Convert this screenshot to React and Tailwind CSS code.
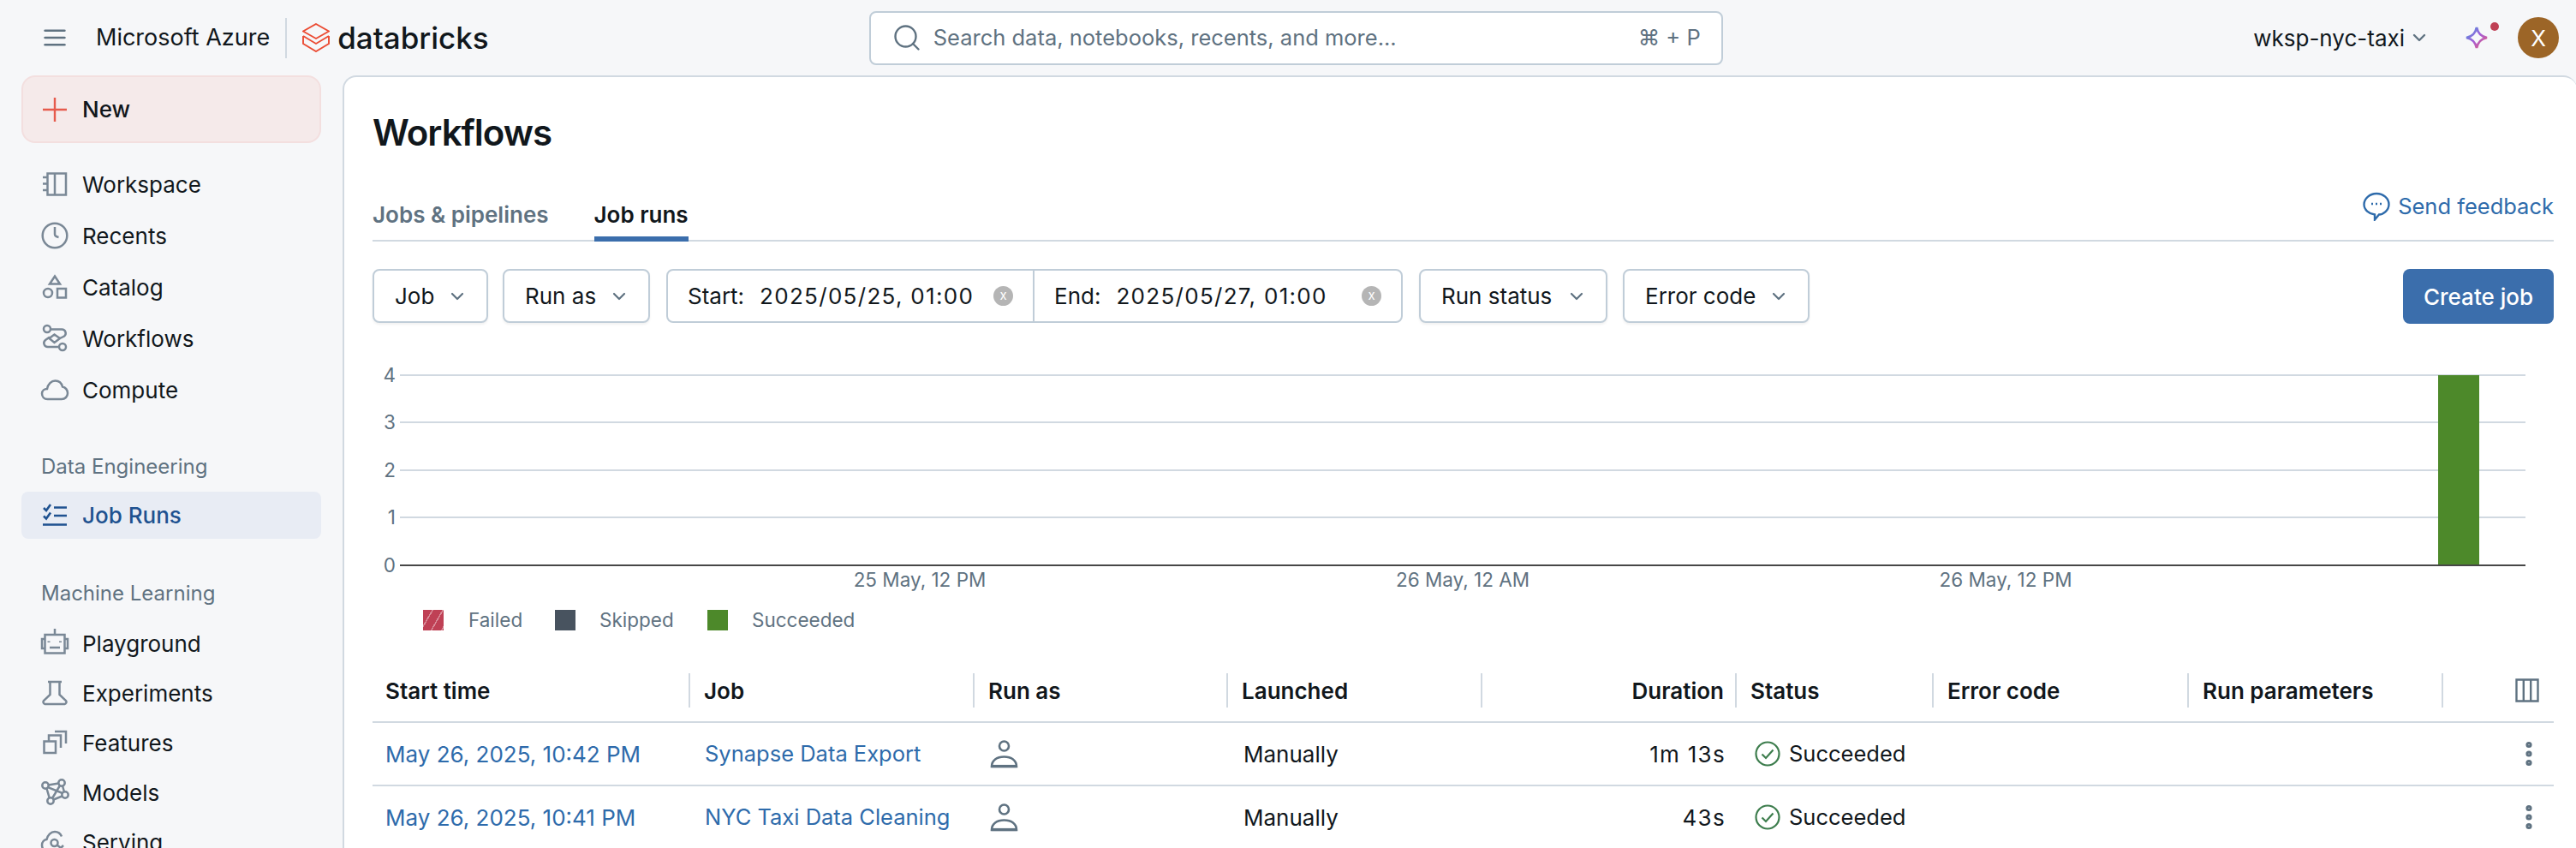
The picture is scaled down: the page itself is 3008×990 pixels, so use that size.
import React from "react";
import { ChevronDown, Menu, MoreVertical, Search } from "lucide-react";

function Svg({ children }) {
  return (
    <svg viewBox="0 0 28 28" fill="none" stroke="currentColor" strokeWidth="2.5" className="w-7 h-7 shrink-0 overflow-visible text-[#7a8896]">
      {children}
    </svg>
  );
}

const WorkspaceIcon = () => (
  <Svg>
    <path d="M5.500 1.500H27v25H5.500zM14 1.500v25M0 6h5.500M0 13.500h5.500M0 21h5.500" />
  </Svg>
);
const ClockIcon = () => (
  <Svg>
    <circle cx="14" cy="14" r="14.300" />
    <path d="M14 4v8.500c0 1.500 2 3 4.500 3.500" />
  </Svg>
);
const CatalogIcon = () => (
  <Svg>
    <path d="M14 1.500l6 9H8z" />
    <circle cx="6" cy="21" r="5" />
    <path d="M17 16h10v10.500H17z" />
  </Svg>
);
const WorkflowsIcon = () => (
  <Svg>
    <circle cx="5" cy="3" r="4" />
    <circle cx="23" cy="24" r="4" />
    <path d="M9 3.500h13a4.500 4.500 0 0 1 3 8L20 14M19 24H6a4.500 4.500 0 0 1-3-8l5-3.500M7.500 14l6-4.500 6.500 4.500-6.500 5z" />
  </Svg>
);
const CloudIcon = () => (
  <Svg>
    <path d="M5.500 25C1.500 25-1 22-1 18.500-1 15 2 13 5 13 6 7.500 10 3.500 14.500 3.500 19 3.500 22 6.500 23 10.500 26.500 11 29 14.500 29 18 29 22 26 25 22 25z" />
  </Svg>
);
const JobRunsIcon = () => (
  <svg viewBox="0 0 28 28" fill="none" stroke="currentColor" strokeWidth="2.600" className="w-7 h-7 shrink-0 text-[#1f5290]">
    <path d="M1 5l3 3 5-7M1 14.500l3 3 5-7M13 4.500h15M13 14h15M0 24.500h28" />
  </svg>
);
const BotIcon = () => (
  <Svg>
    <path d="M14-3v6M2.500 4h23v21.500h-23zM2.500 9H-1v11h3.500M25.500 9H29v11h-3.500M8 19h12" />
    <path d="M7 11.500v1.500M20.500 11.500v1.500" strokeWidth="3" />
  </Svg>
);
const FlaskIcon = () => (
  <Svg>
    <path d="M8.500 1h11v15L27 23a2.500 2.500 0 0 1-1.500 4h-23A2.500 2.500 0 0 1 1 23l7.500-7zM6 1h16" />
  </Svg>
);
const FeaturesIcon = () => (
  <Svg>
    <path d="M1.500 12.500H15V26H1.500zM7 12.500V5.500h14V20M14 1H27v14" />
  </Svg>
);
const ModelsIcon = () => (
  <Svg>
    <circle cx="22" cy="3" r="3.700" />
    <circle cx="3" cy="6" r="3.700" />
    <circle cx="26" cy="17" r="3.700" />
    <circle cx="9" cy="24" r="3.700" />
    <path d="M6.500 5.500L18.500 3.500M6 8.200L23 15M4.500 9.500L7.700 20.500M20 6L11 21M23 6.500l2 7M12.500 22.500l10-4" />
  </Svg>
);
const ServingIcon = () => (
  <Svg>
    <path d="M3 25C0 23-1 20-1 17.500-1 14 1.500 11.500 4.500 11 5.500 6 9.500 2 14 2c3.500 0 6.500 2 8 5.500" />
    <circle cx="13.500" cy="15" r="4" />
    <path d="M16.500 17.500L24 23M21 21l3-3" />
  </Svg>
);

const TOP_NAV = [
  { label: "Workspace", icon: WorkspaceIcon },
  { label: "Recents", icon: ClockIcon },
  { label: "Catalog", icon: CatalogIcon },
  { label: "Workflows", icon: WorkflowsIcon },
  { label: "Compute", icon: CloudIcon },
];

const ML_NAV = [
  { label: "Playground", icon: BotIcon },
  { label: "Experiments", icon: FlaskIcon },
  { label: "Features", icon: FeaturesIcon },
  { label: "Models", icon: ModelsIcon },
  { label: "Serving", icon: ServingIcon },
];

const COLUMNS = [
  { label: "Start time", width: "w-[371px]", pad: "pl-[15px]" },
  { label: "Job", width: "w-[332px]", pad: "pl-[16px]" },
  { label: "Run as", width: "w-[296px]", pad: "pl-[16px]" },
  { label: "Launched", width: "w-[297px]", pad: "pl-[16px]" },
  { label: "Duration", width: "w-[297px]", pad: "justify-end pr-[13px]" },
  { label: "Status", width: "w-[230px]", pad: "pl-[16px]" },
  { label: "Error code", width: "w-[298px]", pad: "pl-[16px]" },
  { label: "Run parameters", width: "w-[297px]", pad: "pl-[16px]" },
];

const RUNS = [
  { start: "May 26, 2025, 10:42 PM", job: "Synapse Data Export", duration: "1m 13s" },
  { start: "May 26, 2025, 10:41 PM", job: "NYC Taxi Data Cleaning", duration: "43s" },
];

function Logo() {
  return (
    <svg viewBox="0 0 32 34" fill="none" stroke="#eb4b33" strokeWidth="1.900" className="w-8 h-[34px]">
      <path d="M16 1L31 9.500 16 18 1 9.500zM1 15l15 9 15-9M1 15v9l15 9 15-9v-9" />
    </svg>
  );
}

function Sparkle() {
  return (
    <svg viewBox="0 0 26 26" fill="none" strokeWidth="2.800" className="w-[26px] h-[26px] overflow-visible">
      <defs>
        <linearGradient id="spark" x1="0" y1="0" x2="1" y2="1">
          <stop offset="0" stopColor="#4299e0" />
          <stop offset="0.5" stopColor="#a25ed8" />
          <stop offset="1" stopColor="#ef5a72" />
        </linearGradient>
      </defs>
      <path stroke="url(#spark)" d="M13 1c1.500 7 4.500 10.500 12 12-7.500 1.500-10.500 5-12 12-1.500-7-4.500-10.500-12-12 7.500-1.500 10.500-5 12-12z" />
    </svg>
  );
}

function NavRow({ item, height }) {
  const Icon = item.icon;
  return (
    <div className={`flex items-center gap-[18px] pl-[50px] text-[26px] text-[#11171c] ${height}`}>
      <Icon />
      <span>{item.label}</span>
    </div>
  );
}

function FilterSelect({ label, width }) {
  return (
    <div className={`flex items-center justify-between h-[63px] pl-[24px] pr-[22px] bg-white border-2 border-[#c0cdd8] rounded-lg shadow-[0_2px_3px_rgba(0,0,0,0.06)] text-[26px] text-[#11171c] ${width}`}>
      <span>{label}</span>
      <ChevronDown className="w-6 h-6 text-[#5f7281]" strokeWidth={2.2} />
    </div>
  );
}

function DateField({ label, value, width }) {
  return (
    <div className={`flex items-center pl-[23px] text-[26px] text-[#11171c] ${width}`}>
      <span className="mr-[18px]">{label}</span>
      <span className="tracking-[1.3px]">{value}</span>
      <span className="ml-auto mr-[23px] w-[23px] h-[23px] rounded-full bg-[#b5b5b5] text-white text-[15px] flex items-center justify-center">x</span>
    </div>
  );
}

function Chart() {
  const ticks = [
    { label: "4", y: 38 },
    { label: "3", y: 93 },
    { label: "2", y: 149 },
    { label: "1", y: 204 },
  ];
  return (
    <svg width="2547" height="295" className="mt-[22px] block">
      {ticks.map((t) => (
        <g key={t.label}>
          <line x1="32" x2="2514" y1={t.y} y2={t.y} stroke="#d1d9e1" strokeWidth="2" />
          <text x="27" y={t.y + 8} textAnchor="end" className="fill-[#5f7281] text-[22.5px]">{t.label}</text>
        </g>
      ))}
      <rect x="2412" y="38" width="48" height="222" fill="#4d892a" />
      <line x1="32" x2="2514" y1="260" y2="260" stroke="#474747" strokeWidth="2" />
      <text x="27" y="268" textAnchor="end" className="fill-[#5f7281] text-[22.5px]">0</text>
      <text x="639" y="285" textAnchor="middle" className="fill-[#5f7281] text-[22.5px]">25 May, 12 PM</text>
      <text x="1273" y="285" textAnchor="middle" className="fill-[#5f7281] text-[22.5px]">26 May, 12 AM</text>
      <text x="1907" y="285" textAnchor="middle" className="fill-[#5f7281] text-[22.5px]">26 May, 12 PM</text>
    </svg>
  );
}

function Legend() {
  return (
    <div className="flex items-center h-6 mt-[17px] pl-[59px] text-[22.5px] text-[#5f7281]">
      <span className="w-6 h-6 bg-[repeating-linear-gradient(120deg,#bf4055_0,#bf4055_9px,#d98c99_9px,#d98c99_10.500px)]" />
      <span className="ml-[29px] w-[101px]">Failed</span>
      <span className="w-6 h-6 bg-[#48535f]" />
      <span className="ml-[28px] w-[126px]">Skipped</span>
      <span className="w-6 h-6 bg-[#4d892a]" />
      <span className="ml-[28px]">Succeeded</span>
    </div>
  );
}

function PersonIcon() {
  return (
    <svg viewBox="0 0 33 33" fill="none" stroke="#5f7281" strokeWidth="2.600" className="w-[33px] h-[33px] shrink-0">
      <circle cx="16.500" cy="7" r="5.500" />
      <path d="M2 31C2 23.500 8 19.500 16.500 19.500S31 23.500 31 31z" />
      <path d="M2 30.500h29" strokeWidth="3.200" />
    </svg>
  );
}

function SuccessIcon() {
  return (
    <svg viewBox="0 0 30 30" fill="none" stroke="#3d7d4d" strokeWidth="2.200" className="w-[30px] h-[30px] shrink-0">
      <circle cx="15" cy="15" r="13.500" />
      <path d="M8.500 15.500l4.500 4.500 8.500-9.500" />
    </svg>
  );
}

function RunRow({ run }) {
  return (
    <div className="flex items-center h-[74px] border-b-2 border-[#d1d9e1] text-[26px] text-[#11171c]">
      <span className="w-[371px] pl-[15px] text-[#2e6bab]">{run.start}</span>
      <span className="w-[332px] pl-[17px] text-[25.5px] text-[#2e6bab]">{run.job}</span>
      <span className="w-[296px] pl-[18px] flex"><PersonIcon /></span>
      <span className="w-[297px] pl-[18px]">Manually</span>
      <span className="w-[297px] pr-[13px] text-right tracking-[1.3px]">{run.duration}</span>
      <span className="w-[230px] pl-[21px] flex items-center gap-[10px] text-[25.5px]"><SuccessIcon />Succeeded</span>
      <span className="flex-1 flex justify-end pr-[11px]">
        <MoreVertical className="w-9 h-9 text-[#5f7281]" strokeWidth={2.8} />
      </span>
    </div>
  );
}

export default function App() {
  return (
    <div className="w-[3008px] h-[990px] overflow-hidden bg-[#f6f7f9] font-[Inter,sans-serif]">
      {/* Top bar */}
      <header className="flex items-center h-[88px] pl-[50px] pr-[20px]">
        <Menu className="w-7 h-7 text-[#5f7281] scale-x-[1.2]" strokeWidth={2.2} />
        <span className="ml-[34px] text-[27px] text-[#11171c]">Microsoft Azure</span>
        <span className="ml-[18px] w-0.5 h-[47px] bg-[#d1d9e1]" />
        <span className="ml-[18px] flex"><Logo /></span>
        <span className="ml-[9px] text-[35px] font-medium text-[#11171c]">databricks</span>
        <div className="ml-[444px] flex items-center w-[997px] h-[63px] pl-[24px] pr-[24px] bg-white border-2 border-[#c0cdd8] rounded-lg text-[25.5px] text-[#5f7281]">
          <Search className="w-9 h-9" strokeWidth={1.6} />
          <span className="ml-[13px]">Search data, notebooks, recents, and more...</span>
          <span className="ml-auto">⌘ + P</span>
        </div>
        <span className="ml-auto text-[26px] text-[#11171c]">wksp-nyc-taxi</span>
        <ChevronDown className="ml-[5px] w-6 h-6 text-[#5f7281]" strokeWidth={2.4} />
        <div className="relative ml-[42px] flex">
          <Sparkle />
          <span className="absolute -top-[5px] -right-[13px] w-[10px] h-[10px] rounded-full bg-[#bf4055]" />
        </div>
        <div className="ml-[35px] w-12 h-12 rounded-full bg-[#9c6527] text-white text-[26px] flex items-center justify-center">X</div>
      </header>

      <div className="flex">
        {/* Sidebar */}
        <aside className="w-[400px] shrink-0">
          <div className="flex items-center gap-[18px] ml-[25px] w-[350px] h-[79px] pl-[23px] bg-[#f5eaea] border-2 border-[#f3dfdf] rounded-2xl text-[26px] font-medium text-[#11171c]">
            <svg viewBox="0 0 28 28" stroke="#e65b4d" strokeWidth="2.400" className="w-7 h-7 shrink-0">
              <path d="M14 0v28M0 14h28" />
            </svg>
            <span>New</span>
          </div>
          <nav className="mt-[18px]">
            {TOP_NAV.map((item) => (
              <NavRow key={item.label} item={item} height="h-[60px]" />
            ))}
          </nav>
          <div className="mt-[45px] pl-[48px] h-[30px] leading-[30px] text-[24px] text-[#5f7281]">Data Engineering</div>
          <div className="flex items-center gap-[18px] mt-[14px] ml-[25px] w-[350px] h-[55px] pl-[25px] bg-[#e8ecf4] rounded-lg text-[26px] font-medium text-[#1f5290]">
            <JobRunsIcon />
            <span>Job Runs</span>
          </div>
          <div className="mt-[49px] pl-[48px] h-[30px] leading-[30px] text-[24px] text-[#5f7281]">Machine Learning</div>
          <nav className="mt-[14px]">
            {ML_NAV.map((item) => (
              <NavRow key={item.label} item={item} height="h-[58px]" />
            ))}
          </nav>
        </aside>

        {/* Main panel */}
        <main className="flex-1 h-[902px] bg-white border-l-2 border-t-2 border-[#d1d9e1] rounded-tl-2xl rounded-tr-2xl pl-[33px] pr-[27px]">
          <h1 className="mt-[37px] h-14 leading-[56px] text-[42px] font-semibold tracking-[-1px] text-[#11171c]">Workflows</h1>
          <div className="flex mt-[39px] h-[60px] border-b-2 border-[#d1d9e1] text-[26px] font-semibold">
            <div className="pt-3 leading-[34px] text-[#5f7281]">Jobs &amp; pipelines</div>
            <div className="ml-[53px] h-[60px] pt-3 leading-[34px] border-b-[6px] border-[#3b6eac] text-[#11171c]">Job runs</div>
            <div className="ml-auto flex items-center self-start gap-[9px] text-[25.5px] font-normal text-[#2e6bab]">
              <svg viewBox="0 0 32 34" fill="none" stroke="currentColor" strokeWidth="2.400" className="w-8 h-[34px]">
                <path d="M16 2c8 0 14.500 5.500 14.500 12.500S24 26.500 19 26.500l-5 6v-6C7 25.500 1.500 21 1.500 14.500S8 2 16 2z" />
                <path d="M10 14h2M15 14h2M20 14h2" />
              </svg>
              <span>Send feedback</span>
            </div>
          </div>

          {/* Filters */}
          <div className="flex mt-[32px]">
            <FilterSelect label="Job" width="w-[135px]" />
            <div className="ml-[17px]"><FilterSelect label="Run as" width="w-[172px]" /></div>
            <div className="ml-[19px] flex h-[63px] bg-white border-2 border-[#c0cdd8] rounded-lg divide-x-2 divide-[#c0cdd8]">
              <DateField label="Start:" value="2025/05/25, 01:00" width="w-[428px]" />
              <DateField label="End:" value="2025/05/27, 01:00" width="w-[428px]" />
            </div>
            <div className="ml-[19px]"><FilterSelect label="Run status" width="w-[220px]" /></div>
            <div className="ml-[18px]"><FilterSelect label="Error code" width="w-[218px]" /></div>
            <div className="ml-auto flex items-center justify-center w-[176px] h-[64px] bg-[#3b6eac] rounded-lg text-[26px] font-medium text-white">Create job</div>
          </div>

          <Chart />
          <Legend />

          {/* Runs table */}
          <div className="mt-[50px]">
            <div className="flex pb-4 border-b-2 border-[#d1d9e1] text-[26px] font-semibold text-[#11171c]">
              {COLUMNS.map((c) => (
                <div key={c.label} className={`h-10 flex items-center border-r-2 border-[#d1d9e1] ${c.width} ${c.pad}`}>
                  {c.label}
                </div>
              ))}
              <div className="flex-1 flex items-center justify-end pr-[17px]">
                <svg viewBox="0 0 28 28" fill="none" stroke="#5f7281" strokeWidth="2.400" className="w-7 h-7">
                  <path d="M1.500 1.500h25v25h-25zM9.800 1.500v25M18.200 1.500v25" />
                </svg>
              </div>
            </div>
            {RUNS.map((run) => (
              <RunRow key={run.start} run={run} />
            ))}
          </div>
        </main>
      </div>
    </div>
  );
}
